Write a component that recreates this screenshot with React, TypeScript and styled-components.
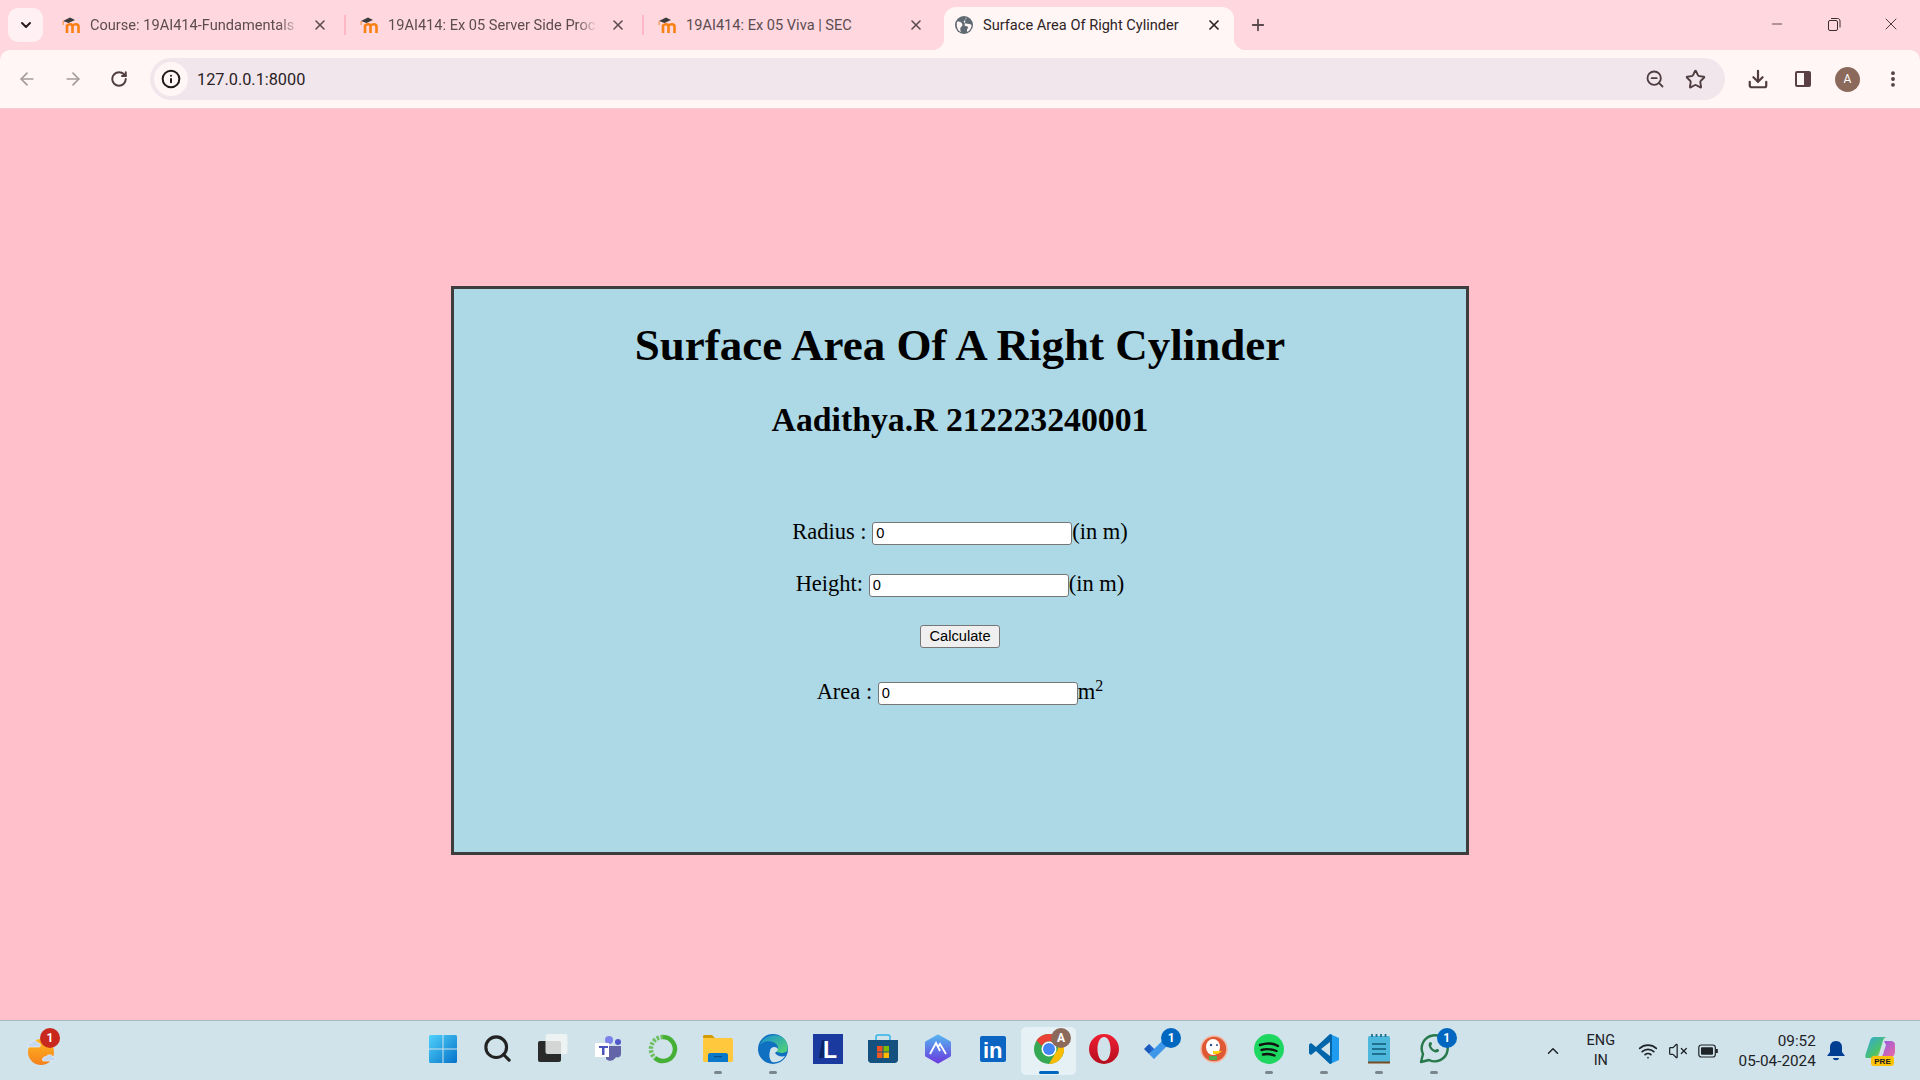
import React from 'react'
import styled, { createGlobalStyle } from 'styled-components'
import {
    ArrowLeft,
    ArrowRight,
    ChevronDown,
    ChevronUp,
    Download,
    EllipsisVertical,
    Info,
    Minus,
    Plus,
    RotateCw,
    Search,
    Star,
    VolumeX,
    Wifi,
    X,
    ZoomOut,
} from 'lucide-react'

const GlobalStyle = createGlobalStyle`
    html, body {
        margin: 0;
        padding: 0;
        height: 100%;
        overflow: hidden;
    }
    * {
        box-sizing: border-box;
    }
`

const Screen = styled.div`
    display: flex;
    flex-direction: column;
    height: 100vh;
    background: #ffc0cb;
    font-family: Roboto, 'Noto Sans', sans-serif;
`

const TabStrip = styled.div`
    display: flex;
    align-items: flex-end;
    height: 50px;
    flex: none;
    background: #ffd7df;
    position: relative;
`

const TabListButton = styled.div`
    width: 35px;
    height: 34px;
    margin: 0 3px 8px 8px;
    flex: none;
    display: flex;
    align-items: center;
    justify-content: center;
    background: #fff1f3;
    border-radius: 10px;
    color: #2b1a1c;
`

const TabSlot = styled.div<{ $separator?: boolean }>`
    position: relative;
    width: 298px;
    height: 43px;
    flex: none;
    padding: 0 4px;

    ${(p) =>
        p.$separator &&
        `
        &::before {
            content: '';
            position: absolute;
            left: 0;
            top: 8px;
            width: 2px;
            height: 20px;
            background: #ffb6c5;
        }
    `}
`

const TabBody = styled.div<{ $active?: boolean }>`
    position: relative;
    display: flex;
    align-items: center;
    height: 100%;
    padding: 0 12px 8px 11px;
    border-radius: 12px 12px 0 0;
    background: ${(p) => (p.$active ? '#fff6f5' : 'transparent')};
    color: ${(p) => (p.$active ? '#2f2426' : '#5c4c50')};

    ${(p) =>
        p.$active &&
        `
        &::before, &::after {
            content: '';
            position: absolute;
            bottom: 0;
            width: 12px;
            height: 12px;
        }
        &::before {
            left: -12px;
            background: radial-gradient(circle at 0 0, transparent 12px, #fff6f5 12.5px);
        }
        &::after {
            right: -12px;
            background: radial-gradient(circle at 100% 0, transparent 12px, #fff6f5 12.5px);
        }
    `}
`

const Favicon = styled.svg`
    flex: none;
`

const TabTitle = styled.div<{ $fade?: boolean }>`
    flex: 1;
    min-width: 0;
    margin-left: 10px;
    font-size: 14.6px;
    white-space: nowrap;
    overflow: hidden;

    ${(p) =>
        p.$fade &&
        `
        -webkit-mask-image: linear-gradient(to right, #000 90%, transparent 100%);
        mask-image: linear-gradient(to right, #000 90%, transparent 100%);
    `}
`

const TabClose = styled.div`
    width: 16px;
    height: 16px;
    flex: none;
    margin-left: 12px;
    display: flex;
    align-items: center;
    justify-content: center;
`

const NewTab = styled.div`
    width: 20px;
    height: 20px;
    margin: 0 0 15px 10px;
    color: #5c4c50;
    display: flex;
    align-items: center;
    justify-content: center;
`

const WindowControls = styled.div`
    margin-left: auto;
    display: flex;
    align-self: flex-start;
    padding: 14px 1px 0 0;
    color: #3a2c2e;
`

const WindowButton = styled.div`
    width: 57px;
    height: 20px;
    display: flex;
    align-items: center;
    justify-content: center;
`

const Toolbar = styled.div`
    display: flex;
    align-items: center;
    height: 59px;
    flex: none;
    padding: 0 5px 0 4px;
    background: #fff6f5;
    border-radius: 10px 10px 0 0;
    border-bottom: 1px solid #f6ccd4;
    box-shadow: 0 -10px 0 0 #ffd7df;
`

const ToolButton = styled.div<{ $muted?: boolean; $width?: number }>`
    width: ${(p) => p.$width ?? 46}px;
    height: 40px;
    flex: none;
    display: flex;
    align-items: center;
    justify-content: center;
    color: ${(p) => (p.$muted ? '#a49a9c' : '#4f3d41')};
`

const Omnibox = styled.div`
    flex: 1;
    height: 42px;
    margin: 0 10px 0 8px;
    padding: 0 10px 0 4px;
    display: flex;
    align-items: center;
    background: #f1e6ec;
    border-radius: 21px;
`

const InfoBadge = styled.div`
    width: 34px;
    height: 34px;
    flex: none;
    border-radius: 50%;
    background: #fff6f5;
    color: #211a1b;
    display: flex;
    align-items: center;
    justify-content: center;
`

const Url = styled.div`
    flex: 1;
    margin-left: 9px;
    font-size: 16.3px;
    color: #2a2325;
`

const Avatar = styled.div`
    width: 25px;
    height: 25px;
    border-radius: 50%;
    background: #8b6a5c;
    color: #fff;
    font-size: 12px;
    display: flex;
    align-items: center;
    justify-content: center;
`

const Page = styled.main`
    flex: 1;
    min-height: 0;
    padding-top: 177px;
    background: #ffc0cb;
`

const Card = styled.section`
    width: 1018px;
    height: 569px;
    margin: 0 auto;
    border: 3px solid #3d3d3d;
    background: #add8e6;
    color: #000;
    font-family: 'Liberation Serif', 'Times New Roman', serif;
    text-align: center;
    overflow: hidden;
`

const Title = styled.h1`
    margin: 30px 0 0;
    font-size: 45px;
    line-height: 52px;
    font-weight: 700;
`

const Subtitle = styled.h2`
    margin: 30px 0 0;
    font-size: 33.75px;
    line-height: 38px;
    font-weight: 700;
`

const Form = styled.form`
    margin-top: 80px;
    display: flex;
    flex-direction: column;
    gap: 26px;
`

const FieldRow = styled.div<{ $lift?: boolean }>`
    height: 26px;
    line-height: 26px;
    font-size: 22.5px;
    margin-top: ${(p) => (p.$lift ? '4px' : '0')};
    white-space: pre;

    sup {
        font-size: 16px;
        line-height: 0;
        vertical-align: 8px;
    }
`

const NumberInput = styled.input`
    width: 200px;
    height: 23px;
    padding: 0 3px;
    border: 1px solid #767676;
    border-radius: 3px;
    background: #fff;
    color: #000;
    font-family: 'Liberation Sans', Arial, sans-serif;
    font-size: 14.67px;
    vertical-align: 1px;
    outline: none;
`

const CalculateButton = styled.button`
    width: 80px;
    height: 23px;
    padding: 0;
    border: 1px solid #767676;
    border-radius: 3px;
    background: #efefef;
    color: #000;
    font-family: 'Liberation Sans', Arial, sans-serif;
    font-size: 14.67px;
    line-height: 21px;
    vertical-align: 2px;
`

const Taskbar = styled.footer`
    display: flex;
    align-items: center;
    height: 60px;
    flex: none;
    background: #d0e2ea;
    border-top: 1px solid #a9b9c0;
`

const WeatherArea = styled.div`
    width: 415px;
    flex: none;
    padding-left: 26px;
    display: flex;
    align-items: center;
`

const WeatherIcon = styled.div`
    position: relative;
    width: 36px;
    height: 36px;
`

const AppRow = styled.div`
    display: flex;
    flex: none;
    height: 100%;
    align-items: center;
`

const AppSlot = styled.div<{ $active?: boolean }>`
    position: relative;
    width: 55.1px;
    height: 48px;
    flex: none;
    display: flex;
    align-items: center;
    justify-content: center;
    padding-bottom: 4px;
    border-radius: 5px;
    background: ${(p) => (p.$active ? '#e6f1f5' : 'transparent')};
`

const RunDot = styled.span<{ $active?: boolean }>`
    position: absolute;
    left: 50%;
    bottom: 1px;
    transform: translateX(-50%);
    width: ${(p) => (p.$active ? 20 : 8)}px;
    height: 3px;
    border-radius: 2px;
    background: ${(p) => (p.$active ? '#0067c0' : '#7a868c')};
`

const CountBadge = styled.span<{ $tone?: 'alert' | 'profile' }>`
    position: absolute;
    top: ${(p) => (p.$tone === 'alert' ? '-5px' : '1px')};
    right: ${(p) => (p.$tone === 'alert' ? '2px' : '5px')};
    width: 20px;
    height: 20px;
    border-radius: 50%;
    background: ${(p) =>
        p.$tone === 'alert' ? '#c8281e' : p.$tone === 'profile' ? '#8b6a5c' : '#0067c0'};
    color: #fff;
    font-size: 12px;
    font-weight: 700;
    display: flex;
    align-items: center;
    justify-content: center;
`

const Tray = styled.div`
    flex: 1;
    display: flex;
    align-items: center;
    padding-left: 82px;
    color: #1d2326;
`

const LangBlock = styled.div`
    width: 40px;
    margin-left: 19px;
    text-align: center;
    font-size: 14.5px;
    line-height: 20px;
`

const StatusGroup = styled.div`
    display: flex;
    gap: 10px;
    margin-left: 17px;
    align-items: center;
`

const Clock = styled.div`
    width: 80px;
    margin-left: 18px;
    text-align: right;
    font-size: 15.3px;
    line-height: 20px;
`

const BellBox = styled.div`
    width: 24px;
    margin-left: 8px;
    display: flex;
    justify-content: center;
`

const CopilotBox = styled.div`
    width: 32px;
    margin-left: 17px;
    display: flex;
`

function MoodleIcon() {
    return (
        <Favicon width="19" height="18" viewBox="0 0 19 18">
            <path d="M6 17V8.500M6 10c1-2.500 5.500-2.500 5.500 0.500V17M11.500 10c1-2.500 6-2.500 6 0.500V17" fill="none" stroke="#f98012" strokeWidth="2.600" />
            <path d="M2 5 9 1.500l5 2.500-6.500 3Z" fill="#3d3a3a" />
            <path d="M2.200 5v4" stroke="#f9a05a" strokeWidth="1.400" />
        </Favicon>
    )
}

function GlobeIcon() {
    return (
        <Favicon width="18" height="18" viewBox="0 0 18 18">
            <circle cx="9" cy="9" r="9" fill="#5f6a72" />
            <path d="M2 6c2-1 4 0 5 1.500s0 3-1 3.500-1 3 0 5C3 15 1 11 2 6ZM11 1c1 2 0 3-1.500 3.500S9 7 11 7.500s4.500 0 5.500 1.500c0 3-1.500 5.500-4 7-1-1.500-.5-3 .5-4 1-1.500-2-1.500-3.500-2.500" fill="#fff6f5" />
        </Favicon>
    )
}

function SidePanelIcon() {
    return (
        <svg width="18" height="18" viewBox="0 0 18 18">
            <rect x="1" y="1" width="16" height="16" rx="2" fill="#5a3f46" />
            <rect x="3" y="3" width="7" height="12" fill="#fff6f5" />
        </svg>
    )
}

function RestoreIcon() {
    return (
        <svg width="14" height="14" viewBox="0 0 14 14" fill="none" stroke="currentColor" strokeWidth="1">
            <rect x="1.500" y="3.500" width="9" height="10" rx="1.500" />
            <path d="M4 1.500h6.500c1.500 0 2.500 1 2.500 2.500v6.500" />
        </svg>
    )
}

function WeatherArt() {
    return (
        <svg width="36" height="36" viewBox="0 0 36 36">
            <defs>
                <linearGradient id="sunFill" x1="0" y1="0" x2="0" y2="1">
                    <stop offset="0" stopColor="#ffb81f" />
                    <stop offset="1" stopColor="#f5801d" />
                </linearGradient>
            </defs>
            <circle cx="15" cy="19" r="13" fill="url(#sunFill)" />
            <path d="M2 14c-1-3 2-4 3-4 1-3 6-3 7 0 3 0 3 4 1 4Z" fill="#c5d8f2" stroke="#e8f0fa" strokeWidth=".7" />
            <path d="M17 28c-2-3 2-5 3-4 1-3 6-3 7 0 3 0 4 4 1 4Z" fill="#c5d8f2" stroke="#e8f0fa" strokeWidth=".7" />
        </svg>
    )
}

function WindowsLogo() {
    return (
        <svg width="30" height="30" viewBox="0 0 30 30">
            <defs>
                <linearGradient id="winFill" x1="0" y1="0" x2="1" y2="1">
                    <stop offset="0" stopColor="#4fd2fb" />
                    <stop offset="1" stopColor="#0672c9" />
                </linearGradient>
            </defs>
            <path d="M1 2.500A1.500 1.500 0 0 1 2.500 1h12v13.500H1ZM15.500 1h12A1.500 1.500 0 0 1 29 2.500v12H15.500ZM1 15.500h13.500V29h-12A1.500 1.500 0 0 1 1 27.500ZM15.500 15.500H29v12a1.500 1.500 0 0 1-1.500 1.500h-12Z" fill="url(#winFill)" />
        </svg>
    )
}

function TaskViewIcon() {
    return (
        <svg width="30" height="30" viewBox="0 0 30 30">
            <rect x="0" y="7" width="23" height="21" rx="2" fill="#2a2a2a" />
            <rect x="7.500" y="0" width="22" height="20" rx="2" fill="#f2f4f5" fillOpacity=".85" />
        </svg>
    )
}

function TeamsIcon() {
    return (
        <svg width="28" height="28" viewBox="0 0 28 28">
            <circle cx="15" cy="5" r="4" fill="#7b83eb" />
            <circle cx="24" cy="7" r="3" fill="#5059c9" />
            <path d="M19 11h8v8c0 3-3 4-5 3-2 4-7 5-10 2V11Z" fill="#6264a7" />
            <rect x="1" y="8" width="14" height="14" fill="#fff" />
            <rect x="5" y="11" width="9" height="2" fill="#4b53bc" />
            <rect x="8" y="11" width="2.500" height="9" fill="#4b53bc" />
        </svg>
    )
}

function RingIcon() {
    return (
        <svg width="30" height="30" viewBox="0 0 30 30">
            <path d="M15 3a12 12 0 1 1-8 21" fill="none" stroke="#45b035" strokeWidth="4.500" />
            <path d="M15 3A12 12 0 0 0 7 24" fill="none" stroke="#6cbf5f" strokeWidth="4.500" strokeDasharray="2.500 1.500" />
        </svg>
    )
}

function ExplorerIcon() {
    return (
        <svg width="30" height="30" viewBox="0 0 30 30">
            <path d="M0 2.500C0 1 1 1 2 1h7l3 3H0Z" fill="#d39b06" />
            <rect x="0" y="4" width="30" height="24" rx="1.500" fill="#ffc83d" />
            <path d="M5 21c0-1 1-2 2-2h16c1 0 2 1 2 2v7H5Z" fill="#0a78c9" />
            <rect x="11" y="22" width="8" height="1.200" fill="#0b4f85" />
        </svg>
    )
}

function EdgeIcon() {
    return (
        <svg width="30" height="30" viewBox="0 0 30 30">
            <defs>
                <linearGradient id="edgeTop" x1="0" y1="0" x2="1" y2="1">
                    <stop offset="0" stopColor="#1a8fd6" />
                    <stop offset="1" stopColor="#54d66f" />
                </linearGradient>
            </defs>
            <circle cx="15" cy="15" r="15" fill="#0f6fc0" />
            <path d="M2 11C5 2 16-1 24 3c4 2 7 8 5 14-3 3-9 2-12 0 3-1 4-3 2-6-4-5-13-5-17 0Z" fill="url(#edgeTop)" />
            <path d="M12 17c0-5 8-5 8-1-1 1-2 2-3 3 2 3 6 4 10 3-3 5-8 7-13 6-3-3-3-8-2-11Z" fill="#d0e2ea" />
        </svg>
    )
}

function LetterTile() {
    return (
        <svg width="30" height="30" viewBox="0 0 30 30">
            <rect width="30" height="30" fill="#1b3aa0" />
            <path d="M9 6h3v18H6Z" fill="#0c2364" />
            <text x="10" y="24" fill="#fff" fontFamily="Liberation Sans" fontWeight="700" fontSize="23">L</text>
        </svg>
    )
}

function StoreIcon() {
    return (
        <svg width="30" height="30" viewBox="0 0 30 30">
            <path d="M8 6V3c0-1 1-2 2-2h10c1 0 2 1 2 2v3" fill="none" stroke="#30b4e8" strokeWidth="1.500" />
            <path d="M0 6h30v20c0 2-2 3-3 3H3c-1 0-3-1-3-3Z" fill="#14517f" />
            <rect x="9" y="12" width="5.500" height="5.500" fill="#f25022" />
            <rect x="15.500" y="12" width="5.500" height="5.500" fill="#7fba00" />
            <rect x="9" y="18.500" width="5.500" height="5.500" fill="#ec5a24" />
            <rect x="15.500" y="18.500" width="5.500" height="5.500" fill="#ffb900" />
        </svg>
    )
}

function HexIcon() {
    return (
        <svg width="28" height="30" viewBox="0 0 28 30">
            <defs>
                <linearGradient id="hexFill" x1="0" y1="0" x2="0" y2="1">
                    <stop offset="0" stopColor="#55b0ee" />
                    <stop offset="1" stopColor="#6a3fe0" />
                </linearGradient>
            </defs>
            <path d="M14 2 25.500 8.500v13L14 28 2.500 21.500v-13Z" fill="url(#hexFill)" stroke="url(#hexFill)" strokeWidth="3" strokeLinejoin="round" />
            <path d="M6 20 12 9l4 8M14 13l2-3 6 10" fill="none" stroke="#fff" strokeWidth="1.800" />
        </svg>
    )
}

function LinkedinTile() {
    return (
        <svg width="26" height="26" viewBox="0 0 26 26">
            <rect width="26" height="26" rx="2" fill="#0a66c2" />
            <text x="3" y="22" fill="#fff" fontFamily="Liberation Sans" fontWeight="700" fontSize="22">in</text>
        </svg>
    )
}

function ChromeIcon() {
    return (
        <svg width="30" height="30" viewBox="0 0 30 30">
            <circle cx="15" cy="15" r="15" fill="#34a853" />
            <path d="M15 0a15 15 0 0 1 13 7.500H15a7.500 7.500 0 0 0-7 4.500L2.500 6.500A15 15 0 0 1 15 0Z" fill="#ea4335" />
            <path d="M28 7.500A15 15 0 0 1 15 30l6.500-11a7.500 7.500 0 0 0 0-11.500Z" fill="#fbbc04" />
            <circle cx="15" cy="15" r="7.500" fill="#fff" />
            <circle cx="15" cy="15" r="6" fill="#4285f4" />
        </svg>
    )
}

function OperaIcon() {
    return (
        <svg width="30" height="30" viewBox="0 0 30 30">
            <defs>
                <linearGradient id="operaFill" x1="0" y1="0" x2="0" y2="1">
                    <stop offset="0" stopColor="#ef1f33" />
                    <stop offset="1" stopColor="#b50e1e" />
                </linearGradient>
            </defs>
            <path fillRule="evenodd" d="M15 0a15 15 0 1 1 0 30 15 15 0 0 1 0-30ZM15 3c-4 0-6.500 5.500-6.500 12S11 27 15 27s6.500-5.500 6.500-12S19 3 15 3Z" fill="url(#operaFill)" />
        </svg>
    )
}

function TodoIcon() {
    return (
        <svg width="30" height="24" viewBox="0 0 30 24">
            <path d="M0 12 5 7l5 5-5 5Z" fill="#185abd" />
            <path d="M5 7 10 12 11 18 10 22Z" fill="#2564cf" />
            <path d="M10 22 5 17 20 2c1-1 2-1 3 0l4 3Z" fill="#3f97ea" />
        </svg>
    )
}

function DuckIcon() {
    return (
        <svg width="28" height="28" viewBox="0 0 28 28">
            <circle cx="14" cy="14" r="13" fill="#de5833" stroke="#f3b9a6" strokeWidth="1.500" />
            <ellipse cx="13" cy="12" rx="7" ry="8" fill="#fff" />
            <path d="M9 21h8v4H9Z" fill="#4caf50" />
            <path d="M13 16h9l-4 3h-5Z" fill="#fdd20a" />
            <circle cx="11" cy="10" r="1.200" fill="#2d4f8e" />
            <circle cx="17" cy="10" r="1" fill="#2d4f8e" />
        </svg>
    )
}

function SpotifyIcon() {
    return (
        <svg width="30" height="30" viewBox="0 0 30 30">
            <circle cx="15" cy="15" r="15" fill="#1ed760" />
            <path d="M6 11c6-2 13-2 18 1M7.500 16c5-1.500 10-1 15 1M9 20.500c4-1 8-.5 11.500 1" fill="none" stroke="#111" strokeWidth="2.400" strokeLinecap="round" />
        </svg>
    )
}

function VsCodeIcon() {
    return (
        <svg width="30" height="30" viewBox="0 0 30 30">
            <path d="M21 0 30 4v22l-9 4-12-12 12-8Z" fill="#1f9cf0" />
            <path d="M21 0 7 13 2 9 0 10.500v9L2 21l5-4 14 13 2-1V1Z" fill="#0065a9" />
            <path d="M21 8v14l-9-7Z" fill="#d0e2ea" />
        </svg>
    )
}

function NotepadIcon() {
    return (
        <svg width="24" height="30" viewBox="0 0 24 30">
            <rect x="1" y="2" width="22" height="27" rx="1.500" fill="#4db8dc" />
            <rect x="1" y="27.500" width="22" height="2" fill="#7a4a21" />
            <path d="M5 0v3M9.500 0v3M14 0v3M18.500 0v3" stroke="#1f6f8f" strokeWidth="1.800" />
            <path d="M5 10h14M5 15h14M5 20h14" stroke="#1f6f8f" strokeWidth="1.800" />
        </svg>
    )
}

function WhatsappIcon() {
    return (
        <svg width="30" height="30" viewBox="0 0 30 30">
            <path d="M2 28 4 20A13 13 0 1 1 10 26Z" fill="#d0e2ea" stroke="#25794a" strokeWidth="2.400" strokeLinejoin="round" />
            <path d="M10 9c1-2 3-1 3 1l-1 2c1 2 2 3 4 4l2-1c2 0 3 2 1 3-4 2-11-4-9-9Z" fill="#25794a" />
        </svg>
    )
}

function BatteryIcon() {
    return (
        <svg width="20" height="14" viewBox="0 0 20 14">
            <rect x=".800" y="1" width="16.500" height="12" rx="2.500" fill="none" stroke="#1d2326" strokeWidth="1.200" />
            <rect x="3" y="3.200" width="12" height="7.600" rx="1" fill="#1d2326" />
            <rect x="18" y="5" width="1.800" height="4" fill="#1d2326" />
        </svg>
    )
}

function BellIcon() {
    return (
        <svg width="18" height="20" viewBox="0 0 18 20">
            <path d="M9 0c4 0 6 3 6 6v5l3 4H0l3-4V6c0-3 2-6 6-6Z" fill="#003e92" />
            <path d="M6 17h6c0 3-6 3-6 0Z" fill="#003e92" />
        </svg>
    )
}

function CopilotIcon() {
    return (
        <svg width="32" height="30" viewBox="0 0 32 30">
            <defs>
                <linearGradient id="copA" x1="0" y1="0" x2="1" y2="1">
                    <stop offset="0" stopColor="#2ea8e0" />
                    <stop offset=".6" stopColor="#4cc26a" />
                    <stop offset="1" stopColor="#f2c531" />
                </linearGradient>
                <linearGradient id="copB" x1="0" y1="0" x2="1" y2="1">
                    <stop offset="0" stopColor="#8a5be8" />
                    <stop offset="1" stopColor="#f06aa0" />
                </linearGradient>
            </defs>
            <path d="M9 1h13c-3 0-4 3-5 7l-3 10c-1 3-3 4-6 4H2c-2 0-2-2-1-5L5 5c1-3 2-4 4-4Z" fill="url(#copA)" />
            <path d="M19 5h7c2 0 4 1 4 4v6c0 5-3 7-7 7H14c3 0 4-3 5-7l2-6Z" fill="url(#copB)" />
            <rect x="6" y="20" width="23" height="10" rx="3" fill="#fdc20a" />
            <text x="17.500" y="28" textAnchor="middle" fontFamily="Liberation Sans" fontWeight="700" fontSize="8" fill="#1a1a1a">PRE</text>
        </svg>
    )
}

const tabs = [
    { title: 'Course: 19AI414-Fundamentals', separator: false, fade: true },
    { title: '19AI414: Ex 05 Server Side Proc', separator: true, fade: true },
    { title: '19AI414: Ex 05 Viva | SEC', separator: true, fade: false },
]

const apps: {
    icon: React.ReactNode
    running?: boolean
    active?: boolean
    badge?: boolean
}[] = [
    { icon: <WindowsLogo /> },
    { icon: <Search size={31} color="#222" strokeWidth={2.4} /> },
    { icon: <TaskViewIcon /> },
    { icon: <TeamsIcon /> },
    { icon: <RingIcon /> },
    { icon: <ExplorerIcon />, running: true },
    { icon: <EdgeIcon />, running: true },
    { icon: <LetterTile /> },
    { icon: <StoreIcon /> },
    { icon: <HexIcon /> },
    { icon: <LinkedinTile /> },
    { icon: <ChromeIcon />, running: true, active: true },
    { icon: <OperaIcon /> },
    { icon: <TodoIcon />, badge: true },
    { icon: <DuckIcon /> },
    { icon: <SpotifyIcon />, running: true },
    { icon: <VsCodeIcon />, running: true },
    { icon: <NotepadIcon />, running: true },
    { icon: <WhatsappIcon />, running: true, badge: true },
]

export default function App() {
    return (
        <Screen>
            <GlobalStyle />
            <TabStrip>
                <TabListButton>
                    <ChevronDown size={16} strokeWidth={3} />
                </TabListButton>
                {tabs.map((tab) => (
                    <TabSlot key={tab.title} $separator={tab.separator}>
                        <TabBody>
                            <MoodleIcon />
                            <TabTitle $fade={tab.fade}>{tab.title}</TabTitle>
                            <TabClose>
                                <X size={16} strokeWidth={2.4} />
                            </TabClose>
                        </TabBody>
                    </TabSlot>
                ))}
                <TabSlot>
                    <TabBody $active>
                        <GlobeIcon />
                        <TabTitle>Surface Area Of Right Cylinder</TabTitle>
                        <TabClose>
                            <X size={16} strokeWidth={2.6} />
                        </TabClose>
                    </TabBody>
                </TabSlot>
                <NewTab>
                    <Plus size={18} strokeWidth={2.4} />
                </NewTab>
                <WindowControls>
                    <WindowButton>
                        <Minus size={16} strokeWidth={1.2} />
                    </WindowButton>
                    <WindowButton>
                        <RestoreIcon />
                    </WindowButton>
                    <WindowButton>
                        <X size={20} strokeWidth={1.1} />
                    </WindowButton>
                </WindowControls>
            </TabStrip>
            <Toolbar>
                <ToolButton $muted>
                    <ArrowLeft size={20} />
                </ToolButton>
                <ToolButton $muted>
                    <ArrowRight size={20} />
                </ToolButton>
                <ToolButton>
                    <RotateCw size={18} strokeWidth={2.6} />
                </ToolButton>
                <Omnibox>
                    <InfoBadge>
                        <Info size={20} strokeWidth={2.4} />
                    </InfoBadge>
                    <Url>127.0.0.1:8000</Url>
                    <ToolButton $width={40}>
                        <ZoomOut size={20} strokeWidth={2.2} />
                    </ToolButton>
                    <ToolButton $width={40}>
                        <Star size={21} strokeWidth={2.2} />
                    </ToolButton>
                </Omnibox>
                <ToolButton $width={45}>
                    <Download size={22} strokeWidth={2.4} />
                </ToolButton>
                <ToolButton $width={45}>
                    <SidePanelIcon />
                </ToolButton>
                <ToolButton $width={45}>
                    <Avatar>A</Avatar>
                </ToolButton>
                <ToolButton $width={45}>
                    <EllipsisVertical size={20} strokeWidth={2.6} />
                </ToolButton>
            </Toolbar>
            <Page>
                <Card>
                    <Title>Surface Area Of A Right Cylinder</Title>
                    <Subtitle>Aadithya.R 212223240001</Subtitle>
                    <Form onSubmit={(e) => e.preventDefault()}>
                        <FieldRow>
                            Radius : <NumberInput defaultValue="0" />(in m)
                        </FieldRow>
                        <FieldRow>
                            Height: <NumberInput defaultValue="0" />(in m)
                        </FieldRow>
                        <FieldRow>
                            <CalculateButton type="button">Calculate</CalculateButton>
                        </FieldRow>
                        <FieldRow $lift>
                            Area : <NumberInput defaultValue="0" />m<sup>2</sup>
                        </FieldRow>
                    </Form>
                </Card>
            </Page>
            <Taskbar>
                <WeatherArea>
                    <WeatherIcon>
                        <WeatherArt />
                        <CountBadge $tone="alert">1</CountBadge>
                    </WeatherIcon>
                </WeatherArea>
                <AppRow>
                    {apps.map((app, i) => (
                        <AppSlot key={i} $active={app.active}>
                            {app.icon}
                            {app.running && <RunDot $active={app.active} />}
                            {app.badge && <CountBadge>1</CountBadge>}
                            {app.active && <CountBadge $tone="profile">A</CountBadge>}
                        </AppSlot>
                    ))}
                </AppRow>
                <Tray>
                    <ChevronUp size={18} strokeWidth={2} />
                    <LangBlock>
                        ENG
                        <br />
                        IN
                    </LangBlock>
                    <StatusGroup>
                        <Wifi size={20} strokeWidth={2} />
                        <VolumeX size={20} strokeWidth={1.5} />
                        <BatteryIcon />
                    </StatusGroup>
                    <Clock>
                        09:52
                        <br />
                        05-04-2024
                    </Clock>
                    <BellBox>
                        <BellIcon />
                    </BellBox>
                    <CopilotBox>
                        <CopilotIcon />
                    </CopilotBox>
                </Tray>
            </Taskbar>
        </Screen>
    )
}
